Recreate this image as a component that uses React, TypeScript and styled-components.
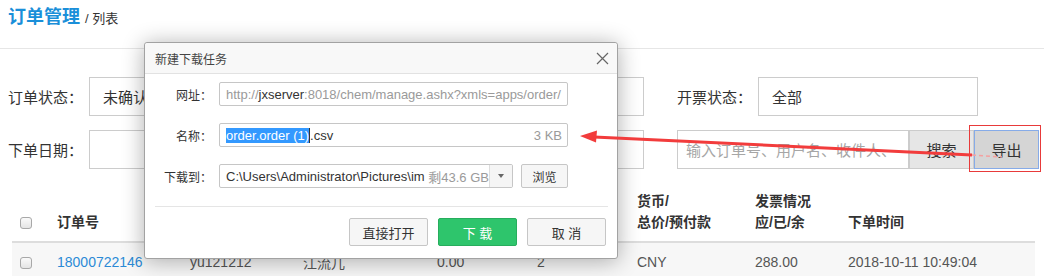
import styled, { createGlobalStyle } from 'styled-components';

const GlobalStyle = createGlobalStyle`
  html, body {
    margin: 0;
    padding: 0;
    background: #ffffff;
  }
  body {
    font-family: "Liberation Sans", "Noto Sans CJK SC", sans-serif;
    color: #333;
  }
  * {
    box-sizing: border-box;
  }
`;

const Page = styled.div`
  position: relative;
  width: 1044px;
  height: 276px;
  overflow: hidden;
`;

const Header = styled.div`
  height: 49px;
  padding: 5px 8px 0;
  border-bottom: 1px solid #e6e6e6;
  display: flex;
  align-items: baseline;
  gap: 5px;
  line-height: 24px;
`;

const Title = styled.span`
  font-size: 18px;
  font-weight: bold;
  color: #1a8fd9;
`;

const Crumb = styled.span`
  font-size: 13px;
  color: #333;
`;

const Filters = styled.div`
  display: grid;
  grid-template-columns: 335px 334px auto;
  grid-auto-rows: 39px;
  row-gap: 14px;
  padding: 28px 0 0 8px;
`;

const FilterItem = styled.div`
  display: flex;
  align-items: center;
`;

const FilterLabel = styled.span`
  width: 81px;
  font-size: 15px;
  color: #333;
`;

const Box = styled.div`
  width: 220px;
  height: 39px;
  border: 1px solid #cccccc;
  padding: 0 13px;
  display: flex;
  align-items: center;
  font-size: 15px;
  color: #333;
`;

const SearchInput = styled.div`
  width: 232px;
  height: 39px;
  border: 1px solid #cccccc;
  padding: 0 8px;
  display: flex;
  align-items: center;
  font-size: 15px;
  color: #a6a6a6;
  white-space: nowrap;
  overflow: hidden;
`;

const ActionButton = styled.div<{ $active?: boolean }>`
  width: 65px;
  height: 39px;
  display: flex;
  align-items: center;
  justify-content: center;
  font-size: 15px;
  color: #333;
  background: ${(p) => (p.$active ? '#d5d5d5' : '#e6e6e6')};
  border: 1px solid ${(p) => (p.$active ? '#86abe8' : '#cccccc')};
`;

const Table = styled.table`
  margin: 16px 0 0 12px;
  width: 1023px;
  border-collapse: collapse;
  table-layout: fixed;
`;

const Th = styled.th<{ $check?: boolean }>`
  text-align: left;
  vertical-align: bottom;
  font-size: 14px;
  font-weight: bold;
  line-height: 21px;
  color: #333;
  padding: 6px 0 8px ${(p) => (p.$check ? '8px' : '12px')};
  border-bottom: 2px solid #dddddd;
`;

const Td = styled.td<{ $check?: boolean; $link?: boolean }>`
  height: 38px;
  font-size: 14px;
  color: ${(p) => (p.$link ? '#2b8ad6' : '#555')};
  padding-left: ${(p) => (p.$check ? '8px' : '12px')};
  background: #f7f7f7;
  white-space: nowrap;
`;

const Check = styled.span`
  display: inline-block;
  width: 12px;
  height: 12px;
  border: 1px solid #a8a8a8;
  border-radius: 3px;
  background: linear-gradient(#fafafa, #e4e4e4);
  vertical-align: middle;
`;

const Dialog = styled.div`
  position: absolute;
  left: 144px;
  top: 42px;
  width: 474px;
  height: 217px;
  background: #ffffff;
  border: 1px solid #a2a2a2;
  border-radius: 3px;
  box-shadow: 0 2px 22px rgba(0, 0, 0, 0.32);
  font-size: 12px;
`;

const DialogTitle = styled.div`
  height: 31px;
  padding: 0 8px 0 10px;
  display: flex;
  align-items: center;
  justify-content: space-between;
  background: #f8f8f8;
  border-bottom: 1px solid #e2e2e2;
  border-radius: 3px 3px 0 0;
  color: #444;
`;

const DialogBody = styled.div`
  padding-top: 8px;
`;

const Field = styled.div`
  display: flex;
  align-items: center;
  height: 24px;
  margin-bottom: 17px;

  &:last-child {
    margin-bottom: 0;
  }
`;

const FieldLabel = styled.span`
  width: 67px;
  margin-right: 7px;
  text-align: right;
  color: #333;
`;

const TextBox = styled.div<{ $width: number }>`
  width: ${(p) => p.$width}px;
  height: 24px;
  border: 1px solid #c6c6c6;
  border-radius: 2px;
  padding: 0 5px 0 6px;
  display: flex;
  align-items: center;
  font-size: 13px;
  color: #333;
  white-space: nowrap;
  overflow: hidden;
`;

const Muted = styled.span`
  color: #9a9a9a;
`;

const Selected = styled.span`
  background: #3399ff;
  color: #ffffff;
  border-right: 1px solid #333;
`;

const Grow = styled.span`
  flex: 1;
`;

const Caret = styled.div`
  width: 24px;
  height: 22px;
  margin-left: auto;
  margin-right: -5px;
  background: #f5f5f5;
  border-left: 1px solid #dddddd;
  display: flex;
  align-items: center;
  justify-content: center;
  flex-shrink: 0;
  &::after {
    content: '';
    border-left: 3px solid transparent;
    border-right: 3px solid transparent;
    border-top: 4px solid #666;
  }
`;

const SmallButton = styled.div`
  width: 47px;
  height: 24px;
  margin-left: 8px;
  border: 1px solid #c6c6c6;
  border-radius: 2px;
  background: #f6f6f6;
  display: flex;
  align-items: center;
  justify-content: center;
  color: #333;
`;

const Separator = styled.div`
  margin: 18px 9px 0 10px;
  border-top: 1px solid #e5e5e5;
`;

const Footer = styled.div`
  display: flex;
  justify-content: flex-end;
  gap: 10px;
  padding: 11px 11px 0 0;
`;

const DialogButton = styled.div<{ $primary?: boolean }>`
  width: 79px;
  height: 28px;
  display: flex;
  align-items: center;
  justify-content: center;
  font-size: 13px;
  border-radius: 2px;
  color: ${(p) => (p.$primary ? '#ffffff' : '#333')};
  background: ${(p) => (p.$primary ? '#2ec56c' : '#f6f6f6')};
  border: 1px solid ${(p) => (p.$primary ? '#27ad5d' : '#c6c6c6')};
`;

const Overlay = styled.svg`
  position: absolute;
  left: 0;
  top: 0;
  pointer-events: none;
`;

const columns = [33, 133, 113, 134, 100, 100, 118, 93, 199];

export default function App() {
  return (
    <Page>
      <GlobalStyle />
      <Header>
        <Title>订单管理</Title>
        <Crumb>/ 列表</Crumb>
      </Header>

      <Filters>
        <FilterItem>
          <FilterLabel>订单状态：</FilterLabel>
          <Box>未确认</Box>
        </FilterItem>
        <FilterItem>
          <FilterLabel />
          <Box />
        </FilterItem>
        <FilterItem>
          <FilterLabel>开票状态：</FilterLabel>
          <Box>全部</Box>
        </FilterItem>
        <FilterItem>
          <FilterLabel>下单日期：</FilterLabel>
          <Box />
        </FilterItem>
        <FilterItem>
          <FilterLabel />
          <Box />
        </FilterItem>
        <FilterItem>
          <SearchInput>输入订单号、用户名、收件人、</SearchInput>
          <ActionButton>搜索</ActionButton>
          <ActionButton $active>导出</ActionButton>
        </FilterItem>
      </Filters>

      <Table>
        <colgroup>
          {columns.map((w, i) => (
            <col key={i} style={{ width: w }} />
          ))}
        </colgroup>
        <thead>
          <tr>
            <Th $check>
              <Check />
            </Th>
            <Th>订单号</Th>
            <Th />
            <Th />
            <Th />
            <Th />
            <Th>
              货币/
              <br />
              总价/预付款
            </Th>
            <Th>
              发票情况
              <br />
              应/已/余
            </Th>
            <Th>下单时间</Th>
          </tr>
        </thead>
        <tbody>
          <tr>
            <Td $check>
              <Check />
            </Td>
            <Td $link>18000722146</Td>
            <Td>yu121212</Td>
            <Td>江流儿</Td>
            <Td>0.00</Td>
            <Td>2</Td>
            <Td>CNY</Td>
            <Td>288.00</Td>
            <Td>2018-10-11 10:49:04</Td>
          </tr>
        </tbody>
      </Table>

      <Dialog>
        <DialogTitle>
          <span>新建下载任务</span>
          <svg width="13" height="13" viewBox="0 0 13 13">
            <path d="M1 1L12 12M12 1L1 12" stroke="#666" strokeWidth="1.2" fill="none" />
          </svg>
        </DialogTitle>
        <DialogBody>
          <Field>
            <FieldLabel>网址：</FieldLabel>
            <TextBox $width={349}>
              <Muted>http://</Muted>jxserver<Muted>:8018/chem/manage.ashx?xmls=apps/order/</Muted>
            </TextBox>
          </Field>
          <Field>
            <FieldLabel>名称：</FieldLabel>
            <TextBox $width={349}>
              <Selected>order.order (1)</Selected>.csv
              <Grow />
              <Muted>3 KB</Muted>
            </TextBox>
          </Field>
          <Field>
            <FieldLabel>下载到：</FieldLabel>
            <TextBox $width={294}>
              C:\Users\Administrator\Pictures\im&nbsp;<Muted>剩43.6 GB</Muted>
              <Caret />
            </TextBox>
            <SmallButton>浏览</SmallButton>
          </Field>
        </DialogBody>
        <Separator />
        <Footer>
          <DialogButton>直接打开</DialogButton>
          <DialogButton $primary>下 载</DialogButton>
          <DialogButton>取 消</DialogButton>
        </Footer>
      </Dialog>

      <Overlay width="1044" height="276" viewBox="0 0 1044 276">
        <rect x="969.5" y="125.5" width="71" height="46" fill="none" stroke="#e83a3a" strokeWidth="1" />
        <line x1="594" y1="137" x2="972" y2="155" stroke="#f23c3c" strokeWidth="3" />
        <line x1="972" y1="155" x2="1002" y2="157" stroke="#f4a0a0" strokeWidth="1.5" strokeDasharray="4 3" />
        <polygon points="580,136 597,130.5 596,142.5" fill="#f23c3c" />
      </Overlay>
    </Page>
  );
}
